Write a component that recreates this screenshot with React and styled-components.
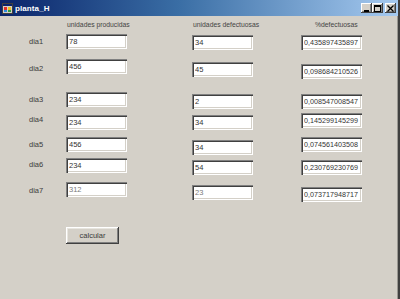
import React from "react";
import styled, { createGlobalStyle } from "styled-components";

const Global = createGlobalStyle`
  html, body { margin: 0; padding: 0; background: #d4d0c8; }
  * { box-sizing: border-box; }
`;

const Window = styled.div`
  width: 400px;
  height: 299px;
  background: #d4d0c8;
  border-right: 2px solid #404040;
  box-shadow: inset -1px 0 0 #9a9892;
  display: flex;
  flex-direction: column;
  overflow: hidden;
  font-family: "Liberation Sans", Arial, sans-serif;
`;

const TitleBar = styled.div`
  height: 16px;
  flex: none;
  display: flex;
  align-items: center;
  padding: 0 2px 0 2px;
  background: linear-gradient(to right, #0a246a 0%, #3a6ea5 45%, #a6caf0 100%);
`;

const Title = styled.span`
  color: #fff;
  font-weight: bold;
  font-size: 8px;
  margin-left: 2px;
  letter-spacing: 0.1px;
`;

const Spacer = styled.div`
  flex: 1;
`;

const CapButton = styled.div`
  width: 11px;
  height: 10px;
  margin-left: ${(p) => (p.$gap ? "2px" : "0")};
  background: #d4d0c8;
  box-shadow: inset -1px -1px 0 #404040, inset 1px 1px 0 #ffffff,
    inset -2px -2px 0 #808080;
  display: flex;
  align-items: center;
  justify-content: center;
`;

const Body = styled.div`
  flex: 1;
  padding: 4px 0 0 28px;
  display: flex;
  flex-direction: column;
`;

const Grid = styled.div`
  display: grid;
  grid-template-columns: 38px 126px 109px 61px;
  align-items: start;
  height: ${(p) => p.$h}px;
  flex: none;
`;

const Header = styled.div`
  font-size: 6.8px;
  line-height: 10px;
  color: #444444;
  white-space: nowrap;
  padding-left: ${(p) => p.$indent}px;
`;

const DayLabel = styled.div`
  font-size: 7.5px;
  line-height: 10px;
  color: #3c3c3c;
  margin-top: ${(p) => p.$dy}px;
  padding-left: 1px;
`;

const Field = styled.input`
  display: block;
  width: 61px;
  height: 15px;
  margin: ${(p) => p.$dy}px 0 0 0;
  padding: 0 0 0 3px;
  border: none;
  outline: none;
  background: #ffffff;
  box-shadow: inset 1px 1px 0 #808080, inset 2px 2px 0 #404040,
    inset -1px -1px 0 #ffffff, inset -2px -2px 0 #d4d0c8;
  font-family: "Liberation Sans", Arial, sans-serif;
  font-size: ${(p) => (p.$small ? 7.2 : 7.5)}px;
  color: ${(p) => (p.$faint ? "#7a7a7a" : "#333333")};
`;

const Button = styled.button`
  grid-column: 2;
  width: 53px;
  height: 17px;
  padding: 0;
  border: none;
  background: #d4d0c8;
  box-shadow: inset -1px -1px 0 #404040, inset 1px 1px 0 #ffffff,
    inset -2px -2px 0 #808080, inset 2px 2px 0 #e8e6e0;
  font-family: "Liberation Sans", Arial, sans-serif;
  font-size: 7.5px;
  color: #3a3a3a;
`;

const rows = [
  { d: "dia1", h: 25, l: 3, a: ["78", 0], b: ["34", 1], c: ["0,435897435897", 1] },
  { d: "dia2", h: 33, l: 5, a: ["456", 0], b: ["45", 3], c: ["0,098684210526", 5] },
  { d: "dia3", h: 21, l: 3, a: ["234", 0], b: ["2", 2], c: ["0,008547008547", 2] },
  { d: "dia4", h: 24, l: 2, a: ["234", 2], b: ["34", 2], c: ["0,145299145299", 0] },
  { d: "dia5", h: 21, l: 3, a: ["456", 0], b: ["34", 3], c: ["0,074561403508", 0] },
  { d: "dia6", h: 24, l: 2, a: ["234", 0], b: ["54", 2], c: ["0,230769230769", 2] },
  { d: "dia7", h: 45, l: 4, a: ["312", 0], b: ["23", 3], c: ["0,073717948717", 5], faint: true },
];

function AppIcon() {
  return (
    <svg width="11" height="11" viewBox="0 0 11 11">
      <rect x="0.5" y="0.5" width="10" height="10" fill="#d4d0c8" stroke="#404040" />
      <rect x="1" y="1" width="9" height="2" fill="#0a246a" />
      <rect x="2" y="4" width="3" height="3" fill="#e0302a" />
      <rect x="6" y="4" width="3" height="3" fill="#f0c020" />
      <rect x="2" y="7" width="3" height="2" fill="#2a8ae0" />
      <rect x="6" y="7" width="3" height="2" fill="#30a040" />
    </svg>
  );
}

export default function App() {
  return (
    <>
      <Global />
      <Window>
        <TitleBar>
          <AppIcon />
          <Title>planta_H</Title>
          <Spacer />
          <CapButton>
            <svg width="7" height="7" viewBox="0 0 7 7">
              <rect x="1" y="5" width="5" height="2" fill="#000" />
            </svg>
          </CapButton>
          <CapButton>
            <svg width="7" height="7" viewBox="0 0 7 7">
              <rect x="0.5" y="0.5" width="6" height="6" fill="none" stroke="#000" />
              <rect x="0" y="0" width="7" height="2" fill="#000" />
            </svg>
          </CapButton>
          <CapButton $gap>
            <svg width="7" height="7" viewBox="0 0 7 7">
              <path d="M0.5 0.5 L6.5 6.5 M6.5 0.5 L0.5 6.5" stroke="#000" strokeWidth="1.3" />
            </svg>
          </CapButton>
        </TitleBar>
        <Body>
          <Grid $h={14}>
            <span />
            <Header $indent={1}>unidades producidas</Header>
            <Header $indent={1}>unidades defectuosas</Header>
            <Header $indent={14}>%defectuosas</Header>
          </Grid>
          {rows.map((r) => (
            <Grid key={r.d} $h={r.h}>
              <DayLabel $dy={r.l}>{r.d}</DayLabel>
              <Field readOnly value={r.a[0]} $dy={r.a[1]} $faint={r.faint} />
              <Field readOnly value={r.b[0]} $dy={r.b[1]} $faint={r.faint} />
              <Field readOnly value={r.c[0]} $dy={r.c[1]} $small />
            </Grid>
          ))}
          <Grid $h={17}>
            <Button>calcular</Button>
          </Grid>
        </Body>
      </Window>
    </>
  );
}
